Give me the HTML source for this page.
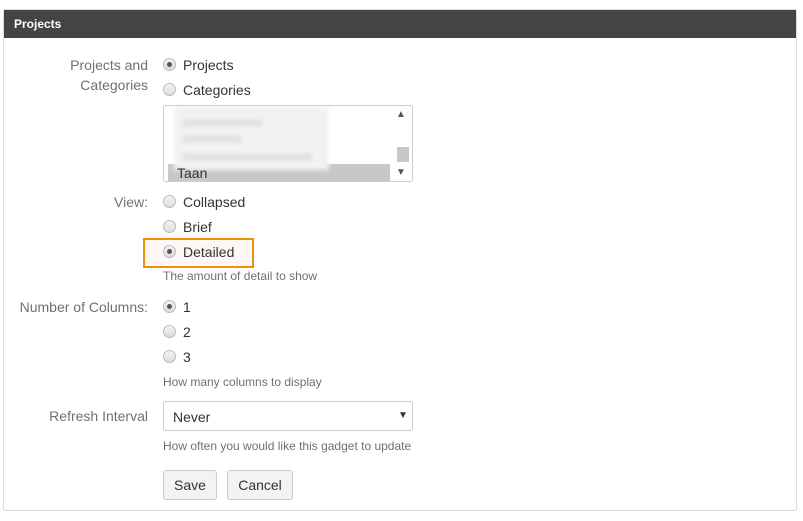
<!DOCTYPE html>
<html><head><meta charset="utf-8"><style>
*{box-sizing:border-box;margin:0;padding:0}
body{width:803px;height:521px;background:#fff;font-family:"Liberation Sans",Arial,sans-serif;position:relative;overflow:hidden}
.panel{position:absolute;left:3px;top:9px;width:794px;height:502px;border:1px solid #ddd;border-radius:2px}
.hdr{position:absolute;left:4px;top:10px;width:792px;height:28px;background:#444;color:#fff;font-weight:bold;font-size:12px;padding:7px 0 0 10px}
.a{position:absolute;white-space:nowrap}
.lbl{position:absolute;right:655px;color:#707070;font-size:14px;text-align:right;line-height:20px}
.t{font-size:14px;color:#333}
.h{font-size:12px;color:#707070}
.r{position:absolute;width:13px;height:13px;border-radius:50%;border:1px solid #bbb;background:linear-gradient(#f4f4f4,#dcdcdc)}
.r.on::after{content:"";position:absolute;left:3px;top:3px;width:5px;height:5px;border-radius:50%;background:#555}
.btn{position:absolute;height:30px;border:1px solid #ccc;border-radius:3px;background:#f3f3f3;font-size:14px;color:#333;text-align:center;line-height:28px}
</style></head><body>
<div class="panel"></div>
<div class="hdr">Projects</div>

<div class="lbl" style="top:55px">Projects and<br>Categories</div>
<div class="r on" style="left:163px;top:58px"></div><div class="a t" style="left:183px;top:57px">Projects</div>
<div class="r" style="left:163px;top:83px"></div><div class="a t" style="left:183px;top:82px">Categories</div>

<div class="a" style="left:163px;top:105px;width:250px;height:77px;border:1px solid #ccc;border-radius:3px;overflow:hidden">
 <div class="a" style="left:4px;top:58px;width:222px;height:18px;background:#c8c8c8"></div>
 <div class="a" style="left:10px;top:0;width:155px;height:64px;background:#f2f2f2;filter:blur(2px)"></div>
 <div class="a" style="left:18px;top:14px;width:80px;height:6px;background:#ddd;filter:blur(2px)"></div>
 <div class="a" style="left:18px;top:30px;width:60px;height:6px;background:#ddd;filter:blur(2px)"></div>
 <div class="a" style="left:18px;top:48px;width:130px;height:6px;background:#ddd;filter:blur(2px)"></div>
 <div class="a" style="left:13px;top:59px;font-size:14px;color:#333">Taan</div>
 <div class="a" style="left:232px;top:3px;font-size:10px;color:#555">▲</div>
 <div class="a" style="left:233px;top:41px;width:12px;height:15px;background:#c8c8c8"></div>
 <div class="a" style="left:232px;top:61px;font-size:10px;color:#555">▼</div>
</div>

<div class="lbl" style="top:192px">View:</div>
<div class="r" style="left:163px;top:195px"></div><div class="a t" style="left:183px;top:194px">Collapsed</div>
<div class="r" style="left:163px;top:220px"></div><div class="a t" style="left:183px;top:219px">Brief</div>
<div class="a" style="left:143px;top:238px;width:111px;height:30px;border:2px solid #f0900a;background:#fff6f6"></div>
<div class="r on" style="left:163px;top:245px"></div><div class="a t" style="left:183px;top:244px">Detailed</div>
<div class="a h" style="left:163px;top:269px">The amount of detail to show</div>

<div class="lbl" style="top:297px">Number of Columns:</div>
<div class="r on" style="left:163px;top:300px"></div><div class="a t" style="left:183px;top:299px">1</div>
<div class="r" style="left:163px;top:325px"></div><div class="a t" style="left:183px;top:324px">2</div>
<div class="r" style="left:163px;top:350px"></div><div class="a t" style="left:183px;top:349px">3</div>
<div class="a h" style="left:163px;top:375px">How many columns to display</div>

<div class="lbl" style="top:406px">Refresh Interval</div>
<div class="a" style="left:163px;top:401px;width:250px;height:30px;border:1px solid #ccc;border-radius:3px">
 <div class="a t" style="left:9px;top:7px">Never</div>
 <div class="a" style="left:234px;top:8px;font-size:10px;color:#333">▼</div>
</div>
<div class="a h" style="left:163px;top:439px">How often you would like this gadget to update</div>

<div class="btn" style="left:163px;top:470px;width:54px">Save</div>
<div class="btn" style="left:227px;top:470px;width:66px">Cancel</div>
</body></html>
